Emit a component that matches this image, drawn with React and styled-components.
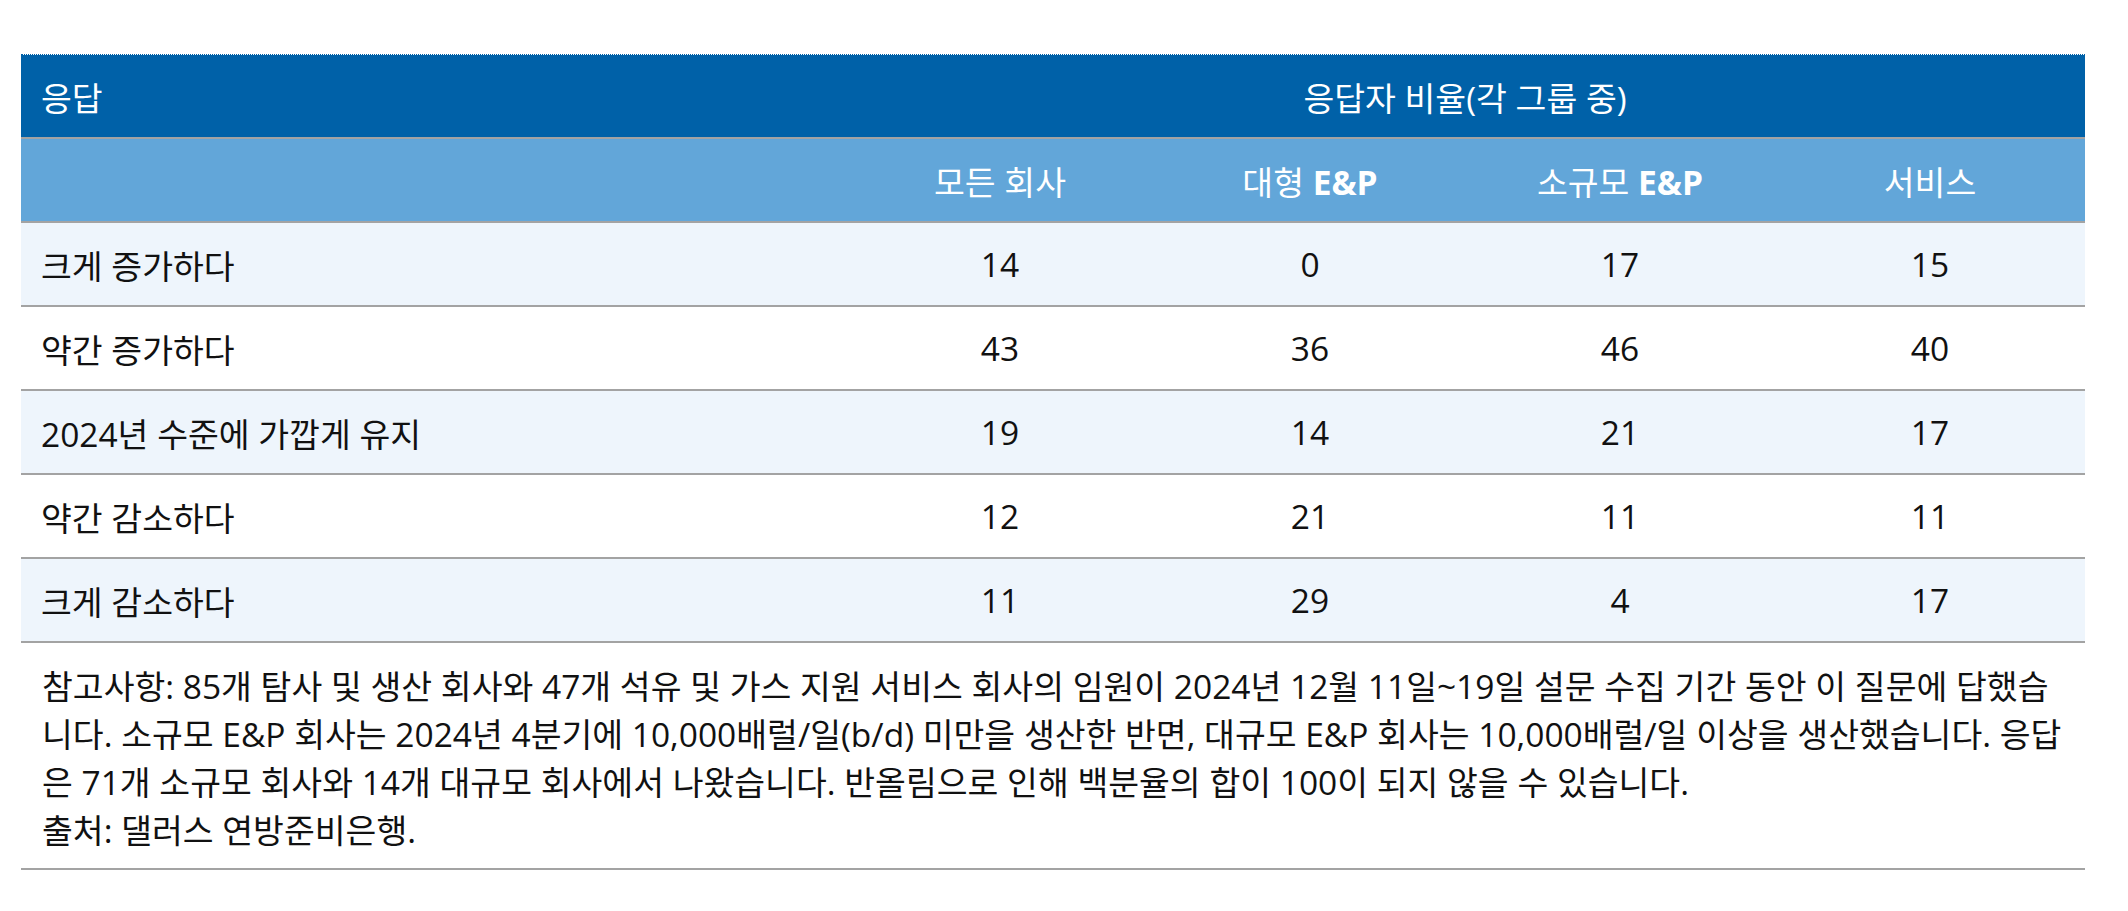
import React from 'react';
import styled, { createGlobalStyle } from 'styled-components';

const GlobalStyle = createGlobalStyle`
  body {
    margin: 0;
    background: #ffffff;
    font-family: 'Open Sans', 'Noto Sans CJK KR', sans-serif;
    color: #111111;
  }
`;

const columns = ['모든 회사', '대형 E&P', '소규모 E&P', '서비스'];

const rows = [
  { label: '크게 증가하다', values: [14, 0, 17, 15] },
  { label: '약간 증가하다', values: [43, 36, 46, 40] },
  { label: '2024년 수준에 가깝게 유지', values: [19, 14, 21, 17] },
  { label: '약간 감소하다', values: [12, 21, 11, 11] },
  { label: '크게 감소하다', values: [11, 29, 4, 17] },
];

// "E&P" is set bold inside the header labels
const renderHead = (text) => {
  const parts = text.split('E&P');
  if (parts.length === 1) return text;
  return (
    <>
      {parts[0]}
      <Strong>E&amp;P</Strong>
      {parts[1]}
    </>
  );
};

const App = () => {
  return (
    <>
      <GlobalStyle />
      <Page>
        <Frame>
          <Table>
            <colgroup>
              <col style={{ width: 824 }} />
              {columns.map((c) => (
                <col key={c} style={{ width: 310 }} />
              ))}
            </colgroup>
            <thead>
              <TopRow>
                <HeadCell>응답</HeadCell>
                <HeadCell colSpan={4} $center>
                  응답자 비율(각 그룹 중)
                </HeadCell>
              </TopRow>
              <SubRow>
                <HeadCell />
                {columns.map((c) => (
                  <HeadCell key={c} $center>
                    {renderHead(c)}
                  </HeadCell>
                ))}
              </SubRow>
            </thead>
            <tbody>
              {rows.map((row, i) => (
                <BodyRow key={row.label} $striped={i % 2 === 0}>
                  <Cell>{row.label}</Cell>
                  {row.values.map((v, j) => (
                    <Cell key={j} $center>
                      {v}
                    </Cell>
                  ))}
                </BodyRow>
              ))}
            </tbody>
          </Table>
        </Frame>
        <Notes>
          <p>
            참고사항: 85개 탐사 및 생산 회사와 47개 석유 및 가스 지원 서비스 회사의 임원이 2024년 12월 11일~19일 설문
            수집 기간 동안 이 질문에 답했습니다. 소규모 E&amp;P 회사는 2024년 4분기에 10,000배럴/일(b/d) 미만을 생산한
            반면, 대규모 E&amp;P 회사는 10,000배럴/일 이상을 생산했습니다. 응답은 71개 소규모 회사와 14개 대규모 회사에서
            나왔습니다. 반올림으로 인해 백분율의 합이 100이 되지 않을 수 있습니다.
          </p>
          <p>출처: 댈러스 연방준비은행.</p>
        </Notes>
      </Page>
    </>
  );
};

export default App;

const Page = styled.div`
  width: 2064px;
  padding: 54px 0 0 21px;
`;

const Frame = styled.div`
  border-top: 1px dotted #0061a8;
`;

const Table = styled.table`
  width: 2064px;
  table-layout: fixed;
  border-collapse: collapse;
  font-size: 33.5px;
`;

const TopRow = styled.tr`
  background: #0061a8;
  border-bottom: 2px solid #a3a3a3;
`;

const SubRow = styled.tr`
  background: #62a6d9;
  border-bottom: 2px solid #a3a3a3;
`;

const HeadCell = styled.th`
  height: 82px;
  padding: 0 20px;
  color: #ffffff;
  font-weight: 400;
  text-align: ${(p) => (p.$center ? 'center' : 'left')};
  vertical-align: middle;
`;

const Strong = styled.span`
  font-weight: 700;
`;

const BodyRow = styled.tr`
  background: ${(p) => (p.$striped ? '#eef5fc' : '#ffffff')};
  border-bottom: 2px solid #a3a3a3;
`;

const Cell = styled.td`
  height: 82px;
  padding: 0 20px;
  color: #111111;
  text-align: ${(p) => (p.$center ? 'center' : 'left')};
  vertical-align: middle;
`;

const Notes = styled.div`
  padding: 19px 20px 14px 21px;
  border-bottom: 2px solid #a3a3a3;
  font-size: 33.5px;
  line-height: 48px;
  color: #111111;
  word-break: break-all;

  p {
    margin: 0;
  }
`;
